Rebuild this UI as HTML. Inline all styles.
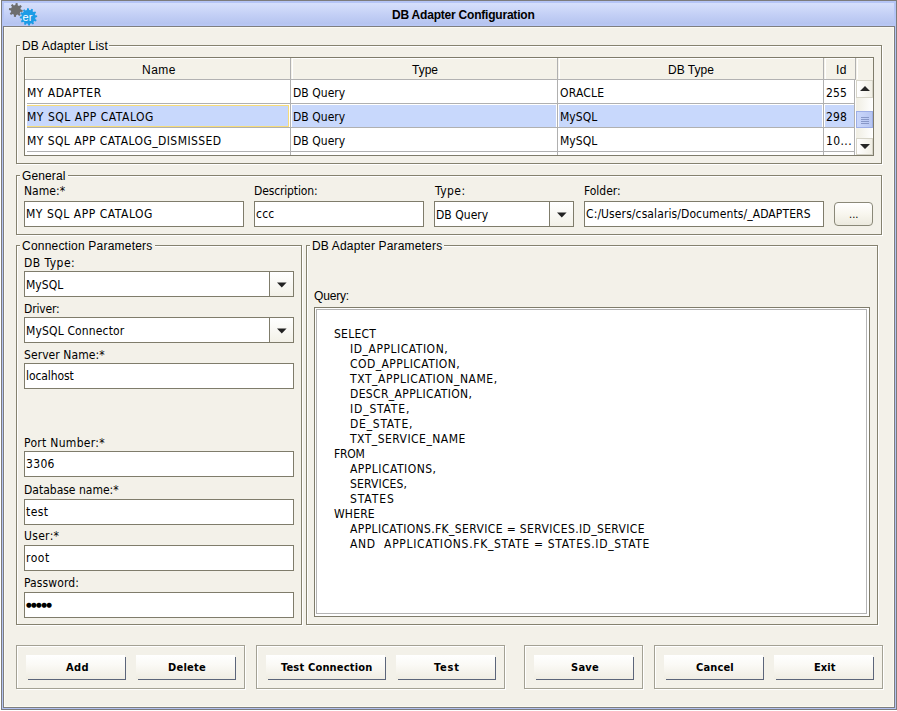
<!DOCTYPE html>
<html><head><meta charset="utf-8"><title>DB Adapter Configuration</title>
<style>
html,body{margin:0;padding:0;background:#fff;}
body{width:897px;height:711px;position:relative;overflow:hidden;font-family:"Liberation Sans",sans-serif;font-size:12px;color:#000;}
div,span{position:absolute;box-sizing:border-box;white-space:pre;}
.ar{font-family:"Liberation Sans",sans-serif;font-size:12px;line-height:14px;}
.lb{font-family:"DejaVu Sans Condensed","Liberation Sans",sans-serif;font-size:12px;line-height:14px;}
.tf{font-family:"DejaVu Sans Condensed","Liberation Sans",sans-serif;font-size:12px;line-height:14px;}
.bt{font-family:"DejaVu Sans Condensed","Liberation Sans",sans-serif;font-size:11px;font-weight:bold;line-height:14px;}
.eg{border:1px solid #85826f;}
.ew{border:1px solid #ffffff;}
.fld{background:#fff;border:1px solid #7f7c6b;}
.btn{border-top:1px solid #fff;border-left:1px solid #fff;border-right:1px solid #5a6070;border-bottom:1px solid #5a6070;background:linear-gradient(#ffffff,#f6f4ec 60%,#ebe8dc);}
.cb{background:linear-gradient(#ffffff,#f3f1e8);border-left:1px solid #7f7c6b;}
</style></head>
<body>
<div style="left:1px;top:0px;width:896px;height:710px;background:#b3c3f3;border:1px solid #7c7c7c;"></div>
<div style="left:2px;top:1px;width:894px;height:25px;background:#b5c5f6;"></div>
<div style="left:4px;top:3px;width:890px;height:23px;background:linear-gradient(#d6e0fb 0,#c3cff5 12px,#b5c4f0 21px,#b9c8f6 22px);"></div>
<div style="left:3px;top:26px;width:892px;height:682px;background:#f3f1e9;border:1px solid #7e7e7e;"></div>
<div style="left:4px;top:27px;width:890px;height:680px;border:1px solid #fbfaf1;"></div>
<span class="ar" style="left:392px;top:8px;letter-spacing:-0.21px;font-weight:bold;">DB Adapter Configuration</span>
<svg style="position:absolute;left:0px;top:0px" width="45" height="27" viewBox="0 0 45 27"><path d="M15.28,5.03 L15.79,3.10 L17.72,3.37 L17.67,5.36 L18.95,6.12 L20.67,5.11 L21.84,6.67 L20.40,8.04 L20.77,9.48 L22.70,9.99 L22.43,11.92 L20.44,11.87 L19.68,13.15 L20.69,14.87 L19.13,16.04 L17.76,14.60 L16.32,14.97 L15.81,16.90 L13.88,16.63 L13.93,14.64 L12.65,13.88 L10.93,14.89 L9.76,13.33 L11.20,11.96 L10.83,10.52 L8.90,10.01 L9.17,8.08 L11.16,8.13 L11.92,6.85 L10.91,5.13 L12.47,3.96 L13.84,5.40Z" fill="#6e6e6e"/><path d="M26.89,10.09 L27.08,8.32 L28.71,8.20 L29.15,9.93 L30.51,10.19 L31.56,8.76 L33.03,9.47 L32.54,11.19 L33.59,12.10 L35.22,11.38 L36.14,12.73 L34.86,13.97 L35.31,15.29 L37.08,15.48 L37.20,17.11 L35.47,17.55 L35.21,18.91 L36.64,19.96 L35.93,21.43 L34.21,20.94 L33.30,21.99 L34.02,23.62 L32.67,24.54 L31.43,23.26 L30.11,23.71 L29.92,25.48 L28.29,25.60 L27.85,23.87 L26.49,23.61 L25.44,25.04 L23.97,24.33 L24.46,22.61 L23.41,21.70 L21.78,22.42 L20.86,21.07 L22.14,19.83 L21.69,18.51 L19.92,18.32 L19.80,16.69 L21.53,16.25 L21.79,14.89 L20.36,13.84 L21.07,12.37 L22.79,12.86 L23.70,11.81 L22.98,10.18 L24.33,9.26 L25.57,10.54Z" fill="#1b9ce6"/><text x="22.6" y="20.6" font-family="Liberation Sans, sans-serif" font-size="11" fill="#ffffff">er</text></svg>
<div class="ew" style="left:17px;top:46px;width:866px;height:119px;"></div>
<div class="eg" style="left:16px;top:45px;width:866px;height:119px;"></div>
<div style="left:20px;top:39px;width:89px;height:15px;background:#f3f1e9;"></div>
<span class="ar" style="left:22px;top:39px;letter-spacing:0.17px;">DB Adapter List</span>
<div style="left:24px;top:57px;width:850px;height:99px;background:#fff;border:1px solid #7f7c6b;"></div>
<div style="left:25px;top:58px;width:848px;height:22px;background:#f4f2e9;"></div>
<div style="left:25px;top:79px;width:831px;height:1px;background:#b2b2b2;"></div>
<div style="left:25px;top:58px;width:265px;height:1px;background:#fff;"></div>
<div style="left:25px;top:58px;width:1px;height:21px;background:#fff;"></div>
<div style="left:290px;top:58px;width:1px;height:21px;background:#b0b0b0;"></div>
<span class="ar" style="left:142px;top:63px;letter-spacing:0.50px;">Name</span>
<div style="left:292px;top:58px;width:265px;height:1px;background:#fff;"></div>
<div style="left:292px;top:58px;width:1px;height:21px;background:#fff;"></div>
<div style="left:557px;top:58px;width:1px;height:21px;background:#b0b0b0;"></div>
<span class="ar" style="left:412px;top:63px;letter-spacing:-0.00px;">Type</span>
<div style="left:559px;top:58px;width:264px;height:1px;background:#fff;"></div>
<div style="left:559px;top:58px;width:1px;height:21px;background:#fff;"></div>
<div style="left:823px;top:58px;width:1px;height:21px;background:#b0b0b0;"></div>
<span class="ar" style="left:668px;top:63px;letter-spacing:-0.00px;">DB Type</span>
<div style="left:825px;top:58px;width:30px;height:1px;background:#fff;"></div>
<div style="left:825px;top:58px;width:1px;height:21px;background:#fff;"></div>
<div style="left:855px;top:58px;width:1px;height:21px;background:#b0b0b0;"></div>
<span class="ar" style="left:836px;top:63px;letter-spacing:0.49px;">Id</span>
<div style="left:857px;top:58px;width:16px;height:1px;background:#fff;"></div>
<div style="left:857px;top:58px;width:1px;height:21px;background:#fff;"></div>
<div style="left:27px;top:103px;width:828px;height:1px;background:#b0b0b0;"></div>
<span class="tf" style="left:27px;top:86px;letter-spacing:0.50px;">MY ADAPTER</span>
<span class="tf" style="left:293px;top:86px;letter-spacing:0.04px;">DB Query</span>
<span class="tf" style="left:560px;top:86px;letter-spacing:0.21px;">ORACLE</span>
<span class="tf" style="left:826px;top:86px;letter-spacing:0.13px;">255</span>
<div style="left:27px;top:127px;width:828px;height:1px;background:#b0b0b0;"></div>
<div style="left:27px;top:105px;width:262px;height:22px;background:#c8d8fc;border:1px solid #f6dc7a;border-left:0;"></div>
<span class="tf" style="left:27px;top:110px;letter-spacing:0.53px;">MY SQL APP CATALOG</span>
<div style="left:292px;top:105px;width:264px;height:22px;background:#c8d8fc;"></div>
<span class="tf" style="left:293px;top:110px;letter-spacing:0.04px;">DB Query</span>
<div style="left:559px;top:105px;width:263px;height:22px;background:#c8d8fc;"></div>
<span class="tf" style="left:560px;top:110px;letter-spacing:0.04px;">MySQL</span>
<div style="left:825px;top:105px;width:29px;height:22px;background:#c8d8fc;"></div>
<span class="tf" style="left:826px;top:110px;letter-spacing:0.13px;">298</span>
<div style="left:27px;top:151px;width:828px;height:1px;background:#b0b0b0;"></div>
<span class="tf" style="left:27px;top:134px;letter-spacing:0.43px;">MY SQL APP CATALOG_DISMISSED</span>
<span class="tf" style="left:293px;top:134px;letter-spacing:0.04px;">DB Query</span>
<span class="tf" style="left:560px;top:134px;letter-spacing:0.04px;">MySQL</span>
<span class="tf" style="left:826px;top:134px;letter-spacing:0.39px;">10...</span>
<div style="left:290px;top:80px;width:1px;height:75px;background:#b0b0b0;"></div>
<div style="left:557px;top:80px;width:1px;height:75px;background:#b0b0b0;"></div>
<div style="left:823px;top:80px;width:1px;height:75px;background:#b0b0b0;"></div>
<div style="left:854px;top:80px;width:1px;height:75px;background:#b0b0b0;"></div>
<div style="left:856px;top:80px;width:17px;height:75px;background:linear-gradient(90deg,#f0eee3,#ffffff);"></div>
<div style="left:856px;top:80px;width:17px;height:18px;border:1px solid #d6d4c8;background:linear-gradient(90deg,#ffffff,#f1efe5);"></div>
<div style="left:856px;top:138px;width:17px;height:17px;border:1px solid #d6d4c8;background:linear-gradient(90deg,#ffffff,#f1efe5);"></div>
<div style="left:856px;top:111px;width:17px;height:17px;border:1px solid #9daee6;background:linear-gradient(90deg,#cad7fb,#b7c6f2);"></div>
<svg style="position:absolute;left:856px;top:80px" width="17" height="75" viewBox="0 0 17 75"><path d="M4,11 L14,11 L9,6Z M4,64 L14,64 L9,69Z" fill="#262626"/><path d="M5,37.5h8M5,39.5h8M5,41.5h8M5,43.5h8" stroke="#8898c8" stroke-width="1"/></svg>
<div class="ew" style="left:17px;top:176px;width:866px;height:60px;"></div>
<div class="eg" style="left:16px;top:175px;width:866px;height:60px;"></div>
<div style="left:20px;top:169px;width:48px;height:15px;background:#f3f1e9;"></div>
<span class="ar" style="left:22px;top:169px;letter-spacing:0.11px;">General</span>
<span class="lb" style="left:24px;top:184px;letter-spacing:0.05px;">Name:*</span>
<span class="lb" style="left:254px;top:184px;letter-spacing:-0.14px;">Description:</span>
<span class="lb" style="left:435px;top:184px;letter-spacing:0.45px;">Type:</span>
<span class="lb" style="left:584px;top:184px;letter-spacing:-0.01px;">Folder:</span>
<div class="fld" style="left:24px;top:201px;width:220px;height:26px;"></div>
<span class="tf" style="left:26px;top:207px;letter-spacing:0.53px;">MY SQL APP CATALOG</span>
<div class="fld" style="left:254px;top:201px;width:170px;height:26px;"></div>
<span class="tf" style="left:256px;top:207px;letter-spacing:0.23px;">ccc</span>
<div class="fld" style="left:434px;top:201px;width:140px;height:26px;"></div>
<div class="cb" style="left:549px;top:202px;width:24px;height:24px;"></div>
<svg style="position:absolute;left:556px;top:212px" width="11" height="6" viewBox="0 0 11 6"><path d="M1,0.4 L10.6,0.4 L5.8,5.6Z" fill="#222"/></svg>
<span class="tf" style="left:436px;top:208px;letter-spacing:0.04px;">DB Query</span>
<div class="fld" style="left:584px;top:201px;width:240px;height:26px;"></div>
<span class="tf" style="left:586px;top:207px;letter-spacing:0.10px;">C:/Users/csalaris/Documents/_ADAPTERS</span>
<div style="left:834px;top:202px;width:39px;height:24px;border:1px solid #8a8878;border-radius:4px;background:linear-gradient(#ffffff,#f8f6ee 50%,#eceadf);"></div>
<span class="lb" style="left:849px;top:208px;font-size:11px;">...</span>
<div class="ew" style="left:17px;top:246px;width:286px;height:380px;"></div>
<div class="eg" style="left:16px;top:245px;width:286px;height:380px;"></div>
<div style="left:20px;top:239px;width:135px;height:15px;background:#f3f1e9;"></div>
<span class="ar" style="left:22px;top:239px;letter-spacing:0.21px;">Connection Parameters</span>
<span class="lb" style="left:24px;top:256px;letter-spacing:0.47px;">DB Type:</span>
<div class="fld" style="left:24px;top:271px;width:270px;height:26px;"></div>
<div class="cb" style="left:269px;top:272px;width:24px;height:24px;"></div>
<svg style="position:absolute;left:276px;top:282px" width="11" height="6" viewBox="0 0 11 6"><path d="M1,0.4 L10.6,0.4 L5.8,5.6Z" fill="#222"/></svg>
<span class="tf" style="left:26px;top:278px;letter-spacing:0.04px;">MySQL</span>
<span class="lb" style="left:24px;top:302px;letter-spacing:-0.17px;">Driver:</span>
<div class="fld" style="left:24px;top:317px;width:270px;height:26px;"></div>
<div class="cb" style="left:269px;top:318px;width:24px;height:24px;"></div>
<svg style="position:absolute;left:276px;top:328px" width="11" height="6" viewBox="0 0 11 6"><path d="M1,0.4 L10.6,0.4 L5.8,5.6Z" fill="#222"/></svg>
<span class="tf" style="left:26px;top:324px;letter-spacing:0.15px;">MySQL Connector</span>
<span class="lb" style="left:24px;top:348px;letter-spacing:0.07px;">Server Name:*</span>
<div class="fld" style="left:24px;top:363px;width:270px;height:26px;"></div>
<span class="tf" style="left:26px;top:369px;letter-spacing:-0.10px;">localhost</span>
<span class="lb" style="left:24px;top:436px;letter-spacing:0.31px;">Port Number:*</span>
<div class="fld" style="left:24px;top:451px;width:270px;height:26px;"></div>
<span class="tf" style="left:26px;top:457px;letter-spacing:0.33px;">3306</span>
<span class="lb" style="left:24px;top:483px;letter-spacing:-0.00px;">Database name:*</span>
<div class="fld" style="left:24px;top:499px;width:270px;height:26px;"></div>
<span class="tf" style="left:26px;top:505px;letter-spacing:0.42px;">test</span>
<span class="lb" style="left:24px;top:529px;letter-spacing:0.31px;">User:*</span>
<div class="fld" style="left:24px;top:545px;width:270px;height:26px;"></div>
<span class="tf" style="left:26px;top:551px;letter-spacing:0.52px;">root</span>
<span class="lb" style="left:24px;top:576px;letter-spacing:0.11px;">Password:</span>
<div class="fld" style="left:24px;top:592px;width:270px;height:26px;"></div>
<span class="tf" style="left:26px;top:598px;letter-spacing:-0.70px;font-size:6.6px;font-family:'DejaVu Sans','DejaVu Sans Condensed',sans-serif;">●●●●●</span>
<div class="ew" style="left:307px;top:246px;width:572px;height:380px;"></div>
<div class="eg" style="left:306px;top:245px;width:572px;height:380px;"></div>
<div style="left:310px;top:239px;width:134px;height:15px;background:#f3f1e9;"></div>
<span class="ar" style="left:312px;top:239px;letter-spacing:0.17px;">DB Adapter Parameters</span>
<span class="ar" style="left:314px;top:289px;letter-spacing:-0.17px;">Query:</span>
<div style="left:314px;top:307px;width:556px;height:310px;background:#fff;border:1px solid #7f7c6b;"></div>
<div style="left:316px;top:309px;width:551px;height:305px;border:1px solid #b4b4b4;background:#fff;"></div>
<span class="tf" style="left:334px;top:327px;letter-spacing:0.26px;">SELECT</span>
<span class="tf" style="left:350px;top:342px;letter-spacing:0.53px;">ID_APPLICATION,</span>
<span class="tf" style="left:350px;top:357px;letter-spacing:0.44px;">COD_APPLICATION,</span>
<span class="tf" style="left:350px;top:372px;letter-spacing:0.55px;">TXT_APPLICATION_NAME,</span>
<span class="tf" style="left:350px;top:387px;letter-spacing:0.36px;">DESCR_APPLICATION,</span>
<span class="tf" style="left:350px;top:402px;letter-spacing:0.83px;">ID_STATE,</span>
<span class="tf" style="left:350px;top:417px;letter-spacing:0.76px;">DE_STATE,</span>
<span class="tf" style="left:350px;top:432px;letter-spacing:0.47px;">TXT_SERVICE_NAME</span>
<span class="tf" style="left:334px;top:447px;letter-spacing:-0.26px;">FROM</span>
<span class="tf" style="left:350px;top:462px;letter-spacing:0.48px;">APPLICATIONS,</span>
<span class="tf" style="left:350px;top:477px;letter-spacing:0.16px;">SERVICES,</span>
<span class="tf" style="left:350px;top:492px;letter-spacing:0.91px;">STATES</span>
<span class="tf" style="left:334px;top:507px;letter-spacing:0.17px;">WHERE</span>
<span class="tf" style="left:350px;top:522px;letter-spacing:0.37px;">APPLICATIONS.FK_SERVICE = SERVICES.ID_SERVICE</span>
<span class="tf" style="left:350px;top:537px;letter-spacing:0.69px;">AND  APPLICATIONS.FK_STATE = STATES.ID_STATE</span>
<div class="ew" style="left:17px;top:646px;width:229px;height:44px;"></div>
<div style="left:16px;top:645px;width:229px;height:44px;border:1px solid #a3a194;"></div>
<div style="left:26px;top:655px;width:99px;height:24px;background:linear-gradient(#ffffff 0,#fbfaf6 40%,#f0ede3 100%);"></div>
<div style="left:125px;top:657px;width:1px;height:23px;background:#5c657a;"></div>
<div style="left:28px;top:679px;width:98px;height:1px;background:#5c657a;"></div>
<span class="bt" style="left:66px;top:661px;letter-spacing:0.36px;">Add</span>
<div style="left:136px;top:655px;width:99px;height:24px;background:linear-gradient(#ffffff 0,#fbfaf6 40%,#f0ede3 100%);"></div>
<div style="left:235px;top:657px;width:1px;height:23px;background:#5c657a;"></div>
<div style="left:138px;top:679px;width:98px;height:1px;background:#5c657a;"></div>
<span class="bt" style="left:168px;top:661px;letter-spacing:0.25px;">Delete</span>
<div class="ew" style="left:257px;top:646px;width:249px;height:44px;"></div>
<div style="left:256px;top:645px;width:249px;height:44px;border:1px solid #a3a194;"></div>
<div style="left:266px;top:655px;width:119px;height:24px;background:linear-gradient(#ffffff 0,#fbfaf6 40%,#f0ede3 100%);"></div>
<div style="left:385px;top:657px;width:1px;height:23px;background:#5c657a;"></div>
<div style="left:268px;top:679px;width:118px;height:1px;background:#5c657a;"></div>
<span class="bt" style="left:281px;top:661px;letter-spacing:0.18px;">Test Connection</span>
<div style="left:396px;top:655px;width:99px;height:24px;background:linear-gradient(#ffffff 0,#fbfaf6 40%,#f0ede3 100%);"></div>
<div style="left:495px;top:657px;width:1px;height:23px;background:#5c657a;"></div>
<div style="left:398px;top:679px;width:98px;height:1px;background:#5c657a;"></div>
<span class="bt" style="left:434px;top:661px;letter-spacing:0.76px;">Test</span>
<div class="ew" style="left:525px;top:646px;width:119px;height:44px;"></div>
<div style="left:524px;top:645px;width:119px;height:44px;border:1px solid #a3a194;"></div>
<div style="left:534px;top:655px;width:99px;height:24px;background:linear-gradient(#ffffff 0,#fbfaf6 40%,#f0ede3 100%);"></div>
<div style="left:633px;top:657px;width:1px;height:23px;background:#5c657a;"></div>
<div style="left:536px;top:679px;width:98px;height:1px;background:#5c657a;"></div>
<span class="bt" style="left:571px;top:661px;letter-spacing:0.26px;">Save</span>
<div class="ew" style="left:655px;top:646px;width:229px;height:44px;"></div>
<div style="left:654px;top:645px;width:229px;height:44px;border:1px solid #a3a194;"></div>
<div style="left:664px;top:655px;width:99px;height:24px;background:linear-gradient(#ffffff 0,#fbfaf6 40%,#f0ede3 100%);"></div>
<div style="left:763px;top:657px;width:1px;height:23px;background:#5c657a;"></div>
<div style="left:666px;top:679px;width:98px;height:1px;background:#5c657a;"></div>
<span class="bt" style="left:696px;top:661px;letter-spacing:0.16px;">Cancel</span>
<div style="left:774px;top:655px;width:99px;height:24px;background:linear-gradient(#ffffff 0,#fbfaf6 40%,#f0ede3 100%);"></div>
<div style="left:873px;top:657px;width:1px;height:23px;background:#5c657a;"></div>
<div style="left:776px;top:679px;width:98px;height:1px;background:#5c657a;"></div>
<span class="bt" style="left:814px;top:661px;letter-spacing:0.11px;">Exit</span>
</body></html>
